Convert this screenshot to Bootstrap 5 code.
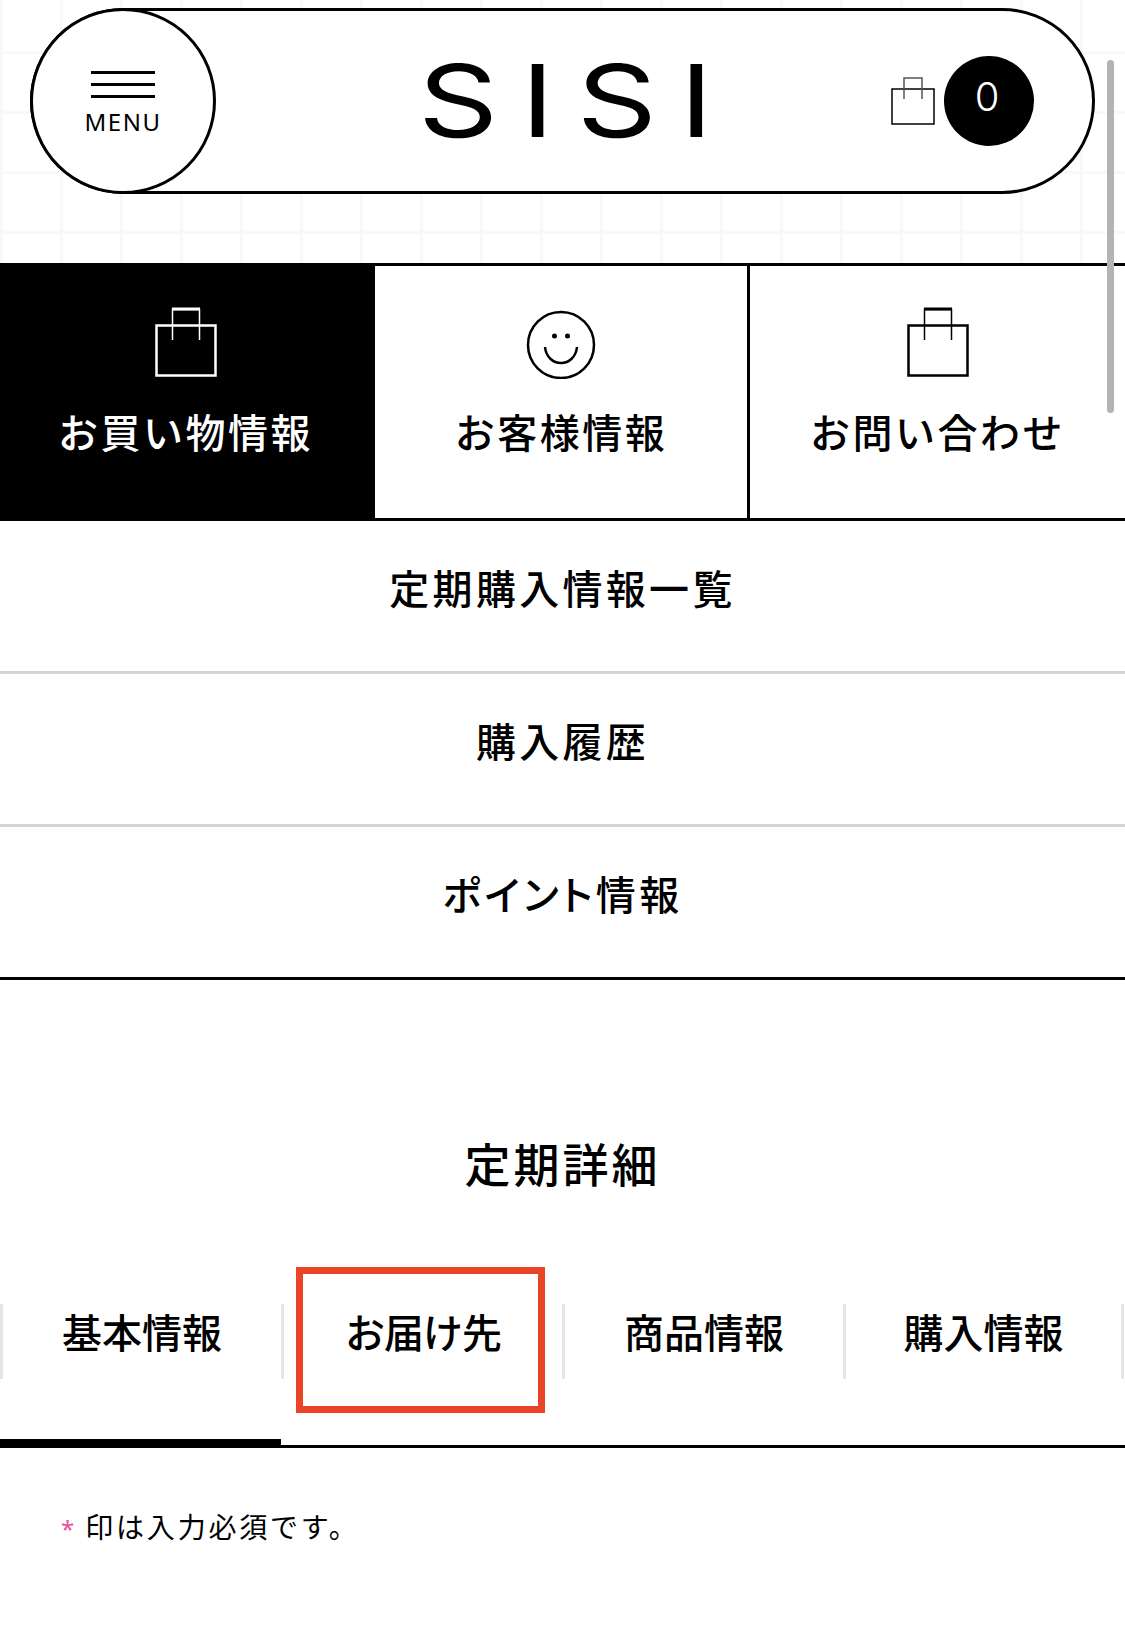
<!DOCTYPE html>
<html lang="ja">
<head>
    <meta charset="UTF-8">
    <meta name="viewport" content="width=device-width, initial-scale=1.0">
    <title>SISI 定期詳細</title>
    <link href="https://cdn.jsdelivr.net/npm/bootstrap@5.3.0/dist/css/bootstrap.min.css" rel="stylesheet">
    <style>
        body {
            font-family: "Noto Sans", "Noto Sans CJK JP", sans-serif;
            color: #000;
            background: #fff;
            height: 1643px;
            overflow: hidden;
        }
        .top-area {
            height: 263px;
            padding: 8px 30px 0;
            background-color: #fff;
            background-image:
                linear-gradient(to right, #f8f8f8 3px, transparent 3px),
                linear-gradient(to bottom, #f8f8f8 3px, transparent 3px);
            background-size: 60px 60px;
            background-position: 0 -9px;
        }
        .pill-bar {
            width: 1065px;
            height: 186px;
            border: 3px solid #000;
            border-radius: 93px;
            background: #fff;
        }
        .menu-disc {
            width: 186px;
            height: 186px;
            margin: 0 0 0 -3px;
            border: 3px solid #000;
            border-radius: 50%;
            background: #fff;
            flex-shrink: 0;
        }
        .menu-lines {
            width: 64px;
            height: 27px;
            border-top: 3px solid #000;
            border-bottom: 3px solid #000;
            position: relative;
            margin-top: 2px;
        }
        .menu-lines::after {
            content: "";
            position: absolute;
            left: 0;
            right: 0;
            top: 9px;
            border-top: 3px solid #000;
        }
        .menu-word {
            font-size: 24px;
            line-height: 1;
            letter-spacing: 1.5px;
            margin-top: 12px;
        }
        .logo-word {
            font-family: "Inter", sans-serif;
            font-weight: 400;
            font-size: 100px;
            line-height: 1;
            letter-spacing: 18px;
            margin-left: 202px;
            width: 318px;
            white-space: nowrap;
            transform: scaleX(1.25);
            transform-origin: left center;
        }
        .cart-box {
            margin-left: 155px;
        }
        .cart-count {
            width: 90px;
            height: 90px;
            margin-left: 9px;
            background: #000;
            color: #fff;
            font-family: "Inter", sans-serif;
            font-size: 40px;
            font-weight: 300;
            padding: 0 4px 8px 0;
        }
        .main-tabs {
            border-top: 3px solid #000;
            border-bottom: 3px solid #000;
            height: 258px;
        }
        .main-tab {
            width: 375px;
            font-size: 40px;
            font-weight: 500;
            letter-spacing: 2.5px;
            line-height: 1;
            padding-top: 41px;
        }
        .tab-split {
            border-right: 3px solid #000;
        }
        .main-tab svg {
            display: block;
            margin-bottom: 34px;
        }
        .tab-on {
            background: #000;
            color: #fff;
            padding-right: 4px;
        }
        .sub-link {
            height: 153px;
            font-size: 40px;
            font-weight: 500;
            letter-spacing: 3.3px;
            border-bottom: 3px solid #d4d4d4;
            padding-bottom: 14px;
        }
        .sub-link:last-child {
            border-bottom-color: #000;
        }
        .kana-tight {
            font-feature-settings: "palt";
        }
        .detail-title {
            font-size: 46px;
            font-weight: 500;
            letter-spacing: 3px;
            line-height: 1;
            margin: 0;
            padding-top: 161px;
        }
        .detail-tabs {
            margin-top: 85px;
            height: 176px;
            border-bottom: 3px solid #000;
            position: relative;
        }
        .detail-tab {
            width: 281px;
            height: 173px;
            font-size: 40px;
            font-weight: 500;
            line-height: 1;
            padding-top: 32px;
            position: relative;
        }
        .detail-label {
            height: 75px;
            border-left: 3px solid #e5e5e5;
            padding-bottom: 17px;
        }
        .detail-tab:last-child .detail-label {
            border-right: 3px solid #e5e5e5;
        }
        .label-narrow {
            letter-spacing: -1px;
        }
        .tab-marker {
            position: absolute;
            left: 0;
            bottom: -3px;
            width: 281px;
            height: 9px;
            background: #000;
        }
        .red-frame {
            position: absolute;
            left: 15px;
            top: -5px;
            width: 249px;
            height: 146px;
            border: 7px solid #eb4326;
        }
        .required-note {
            font-size: 28px;
            letter-spacing: 2.8px;
            line-height: 1;
            padding: 65px 0 0 61px;
            margin: 0;
        }
        .required-mark {
            color: #ec4f9b;
            font-size: 24px;
            letter-spacing: 0;
            margin-right: 11px;
        }
        .scroll-thumb {
            position: absolute;
            left: 1107px;
            top: 60px;
            width: 7px;
            height: 353px;
            border-radius: 4px;
            background: #b3b3b3;
        }
    </style>
</head>
<body class="position-relative">
    <div class="top-area">
        <div class="pill-bar d-flex align-items-center">
            <div class="menu-disc d-flex flex-column align-items-center justify-content-center">
                <div class="menu-lines"></div>
                <div class="menu-word">MENU</div>
            </div>
            <div class="logo-word">SISI</div>
            <div class="cart-box d-flex align-items-center">
                <svg width="44" height="48" viewBox="0 0 44 48" fill="none" stroke="#000" stroke-width="1.5">
                    <rect x="1" y="12" width="42" height="35"/>
                    <path d="M13 22V1h18v21" stroke="#555"/>
                </svg>
                <div class="cart-count rounded-circle d-flex align-items-center justify-content-center">0</div>
            </div>
        </div>
    </div>

    <div class="main-tabs d-flex">
        <div class="main-tab tab-on d-flex flex-column align-items-center">
            <svg width="62" height="72" viewBox="0 0 62 72" fill="none" stroke="#fff" stroke-width="2.5">
                <rect x="1.5" y="18.5" width="59" height="50"/>
                <path d="M17.500 33V2.500h27V33" stroke-width="1.5"/>
                <path d="M17 2h28" stroke-width="3"/>
            </svg>
            お買い物情報
        </div>
        <div class="main-tab tab-split d-flex flex-column align-items-center">
            <svg width="70" height="72" viewBox="0 0 70 72" fill="none" stroke="#000" stroke-width="2.5">
                <circle cx="35" cy="38" r="33"/>
                <circle cx="28.500" cy="29" r="2.500" fill="#000" stroke="none"/>
                <circle cx="41.500" cy="29" r="2.500" fill="#000" stroke="none"/>
                <path d="M19 40c1 10 8 16 16 16s15-6 16-16"/>
            </svg>
            お客様情報
        </div>
        <div class="main-tab d-flex flex-column align-items-center">
            <svg width="62" height="72" viewBox="0 0 62 72" fill="none" stroke="#000" stroke-width="2.5">
                <rect x="1.5" y="18.5" width="59" height="50"/>
                <path d="M17.500 33V2.500h27V33" stroke-width="1.5"/>
                <path d="M17 2h28" stroke-width="3"/>
            </svg>
            お問い合わせ
        </div>
    </div>

    <div>
        <div class="sub-link d-flex align-items-center justify-content-center">定期購入情報一覧</div>
        <div class="sub-link d-flex align-items-center justify-content-center">購入履歴</div>
        <div class="sub-link kana-tight d-flex align-items-center justify-content-center">ポイント情報</div>
    </div>

    <h1 class="detail-title text-center">定期詳細</h1>

    <div class="detail-tabs d-flex">
        <div class="detail-tab">
            <div class="detail-label d-flex align-items-center justify-content-center">基本情報</div>
            <div class="tab-marker"></div>
        </div>
        <div class="detail-tab">
            <div class="detail-label label-narrow d-flex align-items-center justify-content-center">お届け先</div>
            <div class="red-frame"></div>
        </div>
        <div class="detail-tab">
            <div class="detail-label d-flex align-items-center justify-content-center">商品情報</div>
        </div>
        <div class="detail-tab">
            <div class="detail-label d-flex align-items-center justify-content-center">購入情報</div>
        </div>
    </div>

    <p class="required-note"><span class="required-mark">*</span>印は入力必須です。</p>

    <div class="scroll-thumb"></div>
</body>
</html>
